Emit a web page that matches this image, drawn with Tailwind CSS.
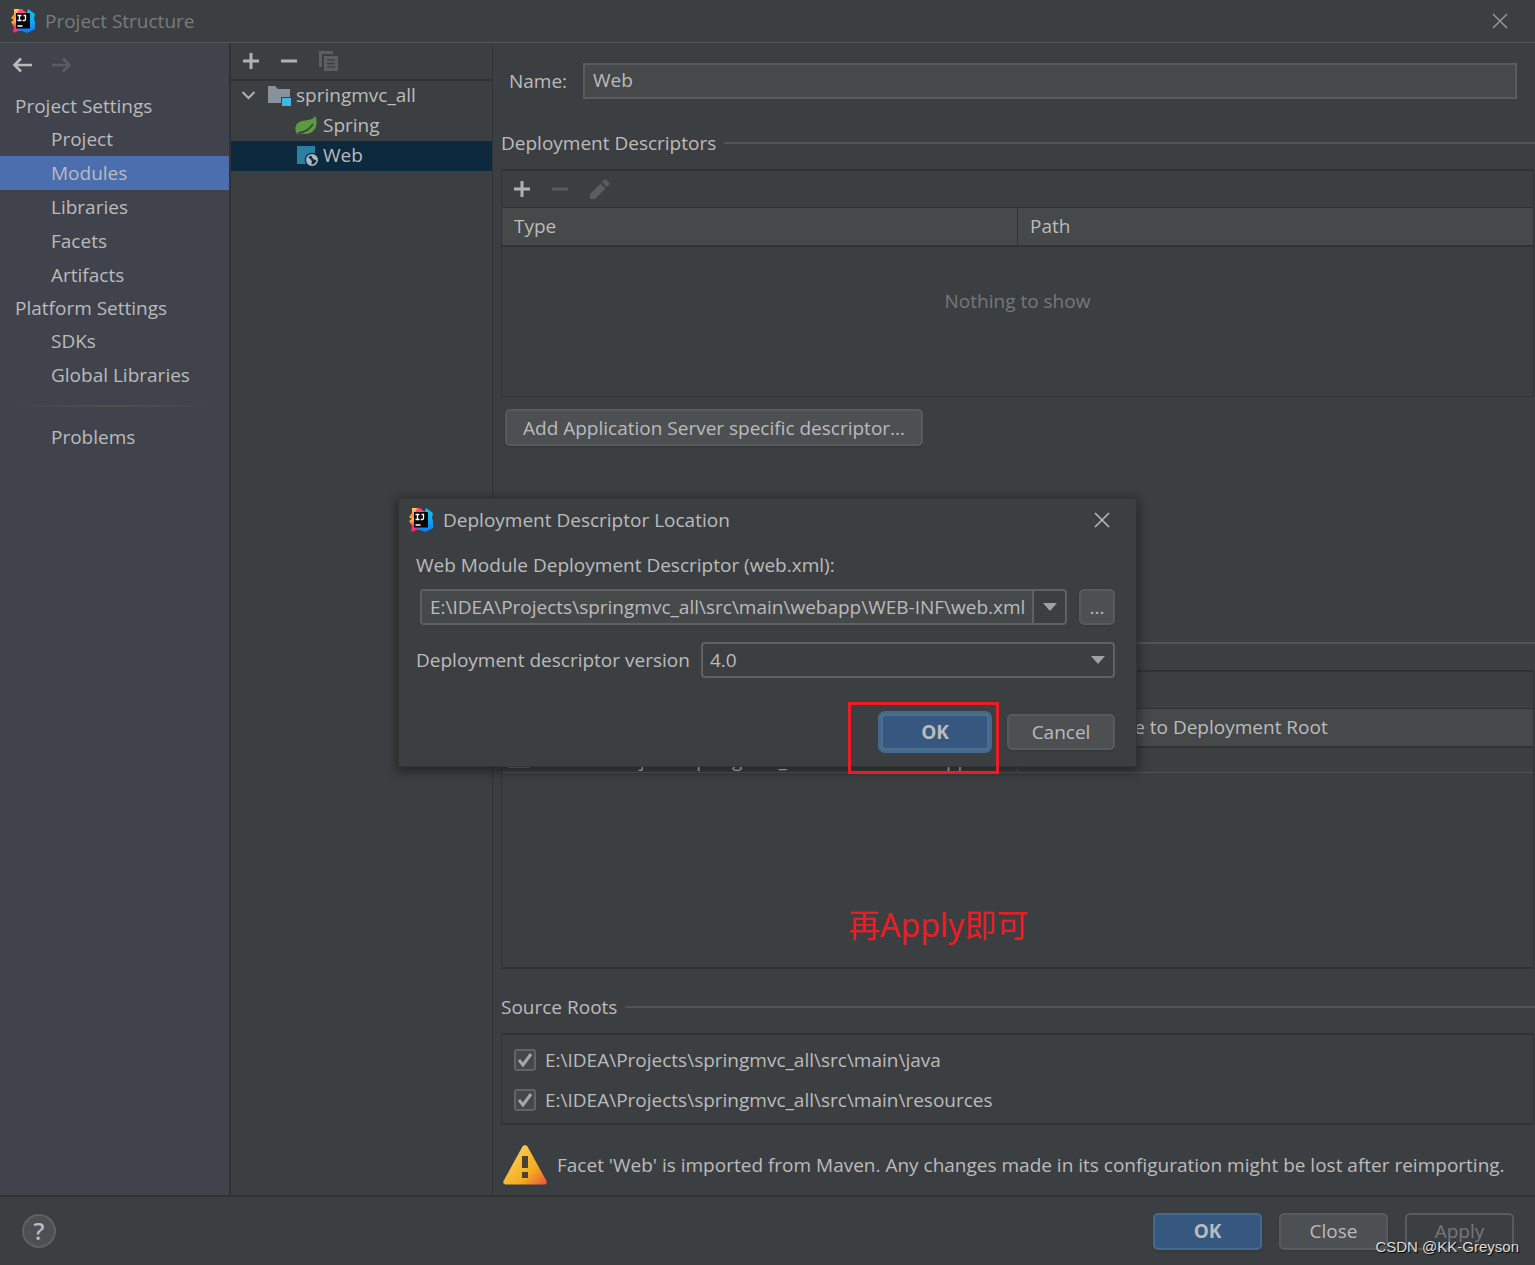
<!DOCTYPE html>
<html lang="en">
<head>
<meta charset="utf-8">
<title>Project Structure</title>
<script src="https://cdn.jsdelivr.net/npm/@tailwindcss/browser@4"></script>
</head>
<body class="bg-[#3c3f41] text-[#bbbbbb] text-[19px] leading-6 font-['Open_Sans','Noto_Sans_CJK_SC',sans-serif] antialiased">

<svg class="absolute size-0" aria-hidden="true">
  <defs>
    <linearGradient id="ijLeft" x1="0" y1="0" x2="0" y2="1">
      <stop offset="0" stop-color="#fdd45c"/><stop offset=".3" stop-color="#fd8a3c"/><stop offset=".5" stop-color="#fcc419"/><stop offset=".75" stop-color="#f4388c"/><stop offset="1" stop-color="#fe2857"/>
    </linearGradient>
    <linearGradient id="ijRight" x1="0" y1="0" x2="0" y2="1">
      <stop offset="0" stop-color="#07c3f2"/><stop offset=".5" stop-color="#12a9f5"/><stop offset="1" stop-color="#087cfa"/>
    </linearGradient>
    <linearGradient id="warn" x1=".2" y1=".3" x2="1" y2="1">
      <stop offset="0" stop-color="#f9c84c"/><stop offset=".55" stop-color="#f4ab1e"/><stop offset="1" stop-color="#e8533f"/>
    </linearGradient>
    <symbol id="ij" viewBox="0 0 24 24">
      <path d="M3 0l6 0 6 4-6 16-4 3.500-3-.5L3 18 0 13l3-2-3-2 3-4z" fill="url(#ijLeft)"/>
      <path d="M8 0h3l5 4-2 3-7 1-2 6 0-6z" fill="#f9427e" opacity=".9"/>
      <path d="M17 0l7 5-1 5 1 3v7l-8 4-5-2-5 0 9-6 1-13z" fill="url(#ijRight)"/>
      <rect x="5" y="4" width="14" height="15.500" fill="#090508"/>
      <path d="M6.500 6.500h4M8.500 6.500v5M6.500 11.500h4M12.500 6.500h2v3.700q0 1.300-1.300 1.300h-1.500M6.500 17h5" stroke="#fff" stroke-width="1.300" fill="none"/>
    </symbol>
    <symbol id="plus" viewBox="0 0 16 16"><path d="M0 8h16M8 0v16" stroke="currentColor" stroke-width="3"/></symbol>
    <symbol id="minus" viewBox="0 0 16 16"><path d="M0 8h16" stroke="currentColor" stroke-width="3"/></symbol>
    <symbol id="close" viewBox="0 0 16 16"><path d="M1 1l14 14M15 1L1 15" stroke="currentColor" stroke-width="1.500"/></symbol>
    <symbol id="pencil" viewBox="0 0 20 20"><path d="M0 15V20h5L15.500 9.500l-5-5zM12 3l5 5 2.300-2.300q.8-.8 0-1.600L15.900.7q-.8-.8-1.600 0z" fill="currentColor"/></symbol>
  </defs>
</svg>

<div class="flex min-h-screen flex-col">
  <header class="flex h-[43px] items-center border-b border-[#515658] pr-[27px] pl-[11px] text-[#777b7d]">
    <svg class="size-6"><use href="#ij"/></svg>
    <h1 class="ml-[10px]">Project Structure</h1>
    <button class="ml-auto text-[#949697]" aria-label="Close window"><svg class="size-4"><use href="#close"/></svg></button>
  </header>

  <div class="flex flex-1">
    <nav class="w-[231px] shrink-0 border-r-2 border-[#323232] bg-[#40434c]">
      <div class="flex h-[47px] items-center gap-5 pb-1 pl-3">
        <button class="text-[#bbbbbb]" aria-label="Back"><svg class="size-5" viewBox="0 0 20 20" fill="none" stroke="currentColor" stroke-width="2.500"><path d="M20 10H2.500M9 3.500L2.500 10 9 16.500"/></svg></button>
        <button class="text-[#5b5c5e]" aria-label="Forward"><svg class="size-5" viewBox="0 0 20 20" fill="none" stroke="currentColor" stroke-width="2.500"><path d="M0 10h17.500M11 3.500l6.500 6.500-6.500 6.500"/></svg></button>
      </div>
      <h2 class="flex h-8 items-center pl-[15px]">Project Settings</h2>
      <a href="#" class="flex h-[34px] items-center pl-[51px]">Project</a>
      <a href="#" class="flex h-[34px] items-center bg-[#4b6eaf] pl-[51px]">Modules</a>
      <a href="#" class="flex h-[34px] items-center pl-[51px]">Libraries</a>
      <a href="#" class="flex h-[34px] items-center pl-[51px]">Facets</a>
      <a href="#" class="flex h-[34px] items-center pl-[51px]">Artifacts</a>
      <h2 class="flex h-8 items-center pl-[15px]">Platform Settings</h2>
      <a href="#" class="flex h-[34px] items-center pl-[51px]">SDKs</a>
      <a href="#" class="flex h-[34px] items-center pl-[51px]">Global Libraries</a>
      <div class="mx-3 my-[13px] h-[2px] bg-linear-to-r from-transparent via-[#505052] to-transparent"></div>
      <a href="#" class="flex h-[34px] items-center pl-[51px]">Problems</a>
    </nav>

    <aside class="w-[262px] shrink-0 border-r border-[#323232]">
      <div class="flex h-[38px] items-center gap-[22px] border-b-2 border-[#323232] pl-3 text-[#afb1b3]">
        <button aria-label="Add"><svg class="size-4"><use href="#plus"/></svg></button>
        <button aria-label="Remove"><svg class="size-4"><use href="#minus"/></svg></button>
        <button aria-label="Copy" class="text-[#5c5e60]"><svg class="size-5" viewBox="0 0 20 20"><path d="M1.500 16V1.500H14" stroke="currentColor" stroke-width="3" fill="none"/><path d="M5 5h14v15H5z" fill="currentColor"/><path d="M8 9h8M8 12.500h8M8 16h8" stroke="#3c3f41" stroke-width="1.300"/></svg></button>
      </div>
      <ul>
        <li class="flex h-[30px] items-center pb-[2px] pl-[10px]">
          <svg class="h-4 w-[15px]" viewBox="0 0 15 16" fill="none" stroke="#afb1b3" stroke-width="2"><path d="M1.500 5l6 6 6-6"/></svg>
          <svg class="ml-3 h-[22px] w-6" viewBox="0 0 24 22"><path d="M0 2h7l3 3h12v8H13v6H0z" fill="#87939a"/><path d="M14 14h9v8h-9z" fill="#40b6e0"/></svg>
          <span class="ml-1">springmvc_all</span>
        </li>
        <li class="flex h-[30px] items-center pb-[2px] pl-[64px]">
          <svg class="h-[20px] w-[22px]" viewBox="0 0 22 20"><path d="M20.500 1c2 6 1.500 12-3 15.500-3.500 3-9 3-13 1.500L3 19.500 1.500 18Q0 16 .5 12.500C1 8 5 6 10 5.500S18 4 20.500 1z" fill="#5b9a41"/><path d="M3 18q10-1 15-9" stroke="#3c3f41" stroke-width="1.600" fill="none"/></svg>
          <span class="ml-[6px]">Spring</span>
        </li>
        <li class="flex h-[30px] items-center bg-[#0d293e] pb-[2px] pl-[66px]">
          <svg class="h-[22px] w-[22px]" viewBox="0 0 22 22"><path d="M0 2h18v18H0z" fill="#2b7fa3"/><circle cx="15" cy="16" r="7.300" fill="#0d293e"/><circle cx="15" cy="16" r="5.200" fill="none" stroke="#afb9c0" stroke-width="1.600"/><path d="M10 13.500l3 1 2 3-1 4q-3-2-4-5zM14 10.500l5 2 1 4-3-1-2-2z" fill="#afb9c0"/></svg>
          <span class="ml-1">Web</span>
        </li>
      </ul>
    </aside>

    <main class="min-w-0 flex-1 pl-2">
      <div class="flex items-center pt-5 pr-[18px] pl-2">
        <label for="name" class="w-[74px]">Name:</label>
        <input id="name" value="Web" class="h-9 flex-1 border-2 border-[#585c5d] bg-[#45494a] px-2 pb-[2px] outline-none">
      </div>

      <h2 class="mt-8 flex items-center gap-2">Deployment Descriptors<span class="h-[2px] flex-1 bg-[#515456]"></span></h2>
      <section class="mt-[14px] mr-px h-[228px] border border-t-2 border-[#323232]">
        <div class="flex h-9 items-center gap-[22px] pl-3 text-[#5a5c5e]">
          <button aria-label="Add descriptor" class="text-[#afb1b3]"><svg class="size-4"><use href="#plus"/></svg></button>
          <button aria-label="Remove descriptor"><svg class="size-4"><use href="#minus"/></svg></button>
          <button aria-label="Edit descriptor"><svg class="size-5"><use href="#pencil"/></svg></button>
        </div>
        <table class="w-full table-fixed border-collapse">
          <thead><tr class="h-[38px] border-t border-b-2 border-[#323232] bg-[#45494a] text-left">
            <th class="border-r border-[#323232] pl-3 font-normal">Type</th><th class="pl-3 font-normal">Path</th>
          </tr></thead>
          <tbody><tr><td colspan="2" class="h-[110px] text-center text-[#777777]">Nothing to show</td></tr></tbody>
        </table>
      </section>
      <button class="mt-3 ml-1 h-[37px] rounded-[5px] border-2 border-[#585b5c] bg-[#4c5052] px-4 shadow-sm">Add Application Server specific descriptor...</button>

      <h2 class="mt-[185px] flex items-center gap-2">Web Resource Directories<span class="h-[2px] flex-1 bg-[#515456]"></span></h2>
      <section class="mt-[15px] mr-px h-[299px] border border-y-2 border-[#323232]">
        <div class="flex h-9 items-center gap-[22px] pl-3 text-[#5a5c5e]">
          <button aria-label="Add directory" class="text-[#afb1b3]"><svg class="size-4"><use href="#plus"/></svg></button>
          <button aria-label="Remove directory"><svg class="size-4"><use href="#minus"/></svg></button>
          <button aria-label="Edit directory"><svg class="size-5"><use href="#pencil"/></svg></button>
        </div>
        <table class="w-full table-fixed border-collapse">
          <thead><tr class="h-[38px] border-t border-b-2 border-[#323232] bg-[#45494a] text-left">
            <th class="border-r border-[#323232] pl-3 font-normal">Web Resource Directory</th><th class="pl-3 font-normal">Path Relative to Deployment Root</th>
          </tr></thead>
          <tbody><tr class="border-b border-[#515456]">
            <td class="border-r border-[#515456] p-0 pl-[6px]"><div class="flex h-6 items-start gap-2"><svg class="h-[22px] w-[22px]" viewBox="0 0 22 22"><path d="M0 3h7l3 3h12v14H0z" fill="#5f676b"/></svg>E:\IDEA\Projects\springmvc_all\src\main\webapp</div></td><td class="p-0 pl-1">/</td>
          </tr></tbody>
        </table>
      </section>

      <h2 class="mt-[26px] flex items-center gap-2">Source Roots<span class="h-[2px] flex-1 bg-[#515456]"></span></h2>
      <section class="mt-[14px] mr-px flex h-[92px] flex-col justify-center gap-4 border border-y-2 border-[#323232] pt-px pl-3">
        <label class="flex items-center gap-[9px]">
          <span class="grid"><input type="checkbox" checked class="col-start-1 row-start-1 size-[22px] appearance-none rounded-[3px] border-2 border-[#626465] bg-[#43494a]"><svg class="pointer-events-none col-start-1 row-start-1 size-[22px]" viewBox="0 0 22 22" fill="none" stroke="#a7a7a7" stroke-width="3"><path d="M5 11l4 5 8-11"/></svg></span>
          E:\IDEA\Projects\springmvc_all\src\main\java
        </label>
        <label class="flex items-center gap-[9px]">
          <span class="grid"><input type="checkbox" checked class="col-start-1 row-start-1 size-[22px] appearance-none rounded-[3px] border-2 border-[#626465] bg-[#43494a]"><svg class="pointer-events-none col-start-1 row-start-1 size-[22px]" viewBox="0 0 22 22" fill="none" stroke="#a7a7a7" stroke-width="3"><path d="M5 11l4 5 8-11"/></svg></span>
          E:\IDEA\Projects\springmvc_all\src\main\resources
        </label>
      </section>
      <p class="flex h-[70px] items-center gap-[10px] pt-[10px] pl-[2px] whitespace-nowrap">
        <svg class="h-10 w-11 shrink-0" viewBox="0 0 44 40"><path d="M19.500 1.500q2.500-3 5 0L43.500 36q1 3-2 3.500h-39q-3-.5-2-3.500z" fill="url(#warn)"/><path d="M19 11h6v12h-6zM19 27h6v6h-6z" fill="#4a4034"/></svg>
        Facet 'Web' is imported from Maven. Any changes made in its configuration might be lost after reimporting.
      </p>
    </main>
  </div>

  <footer class="flex h-[70px] items-center gap-[17px] border-t-2 border-[#323232] pr-[21px] pl-[22px]">
    <button class="mr-auto grid size-[34px] place-items-center rounded-full border-2 border-[#5e6162] bg-[#4c5052] text-[24px] font-semibold" aria-label="Help">?</button>
    <button class="h-[37px] w-[109px] rounded-[5px] border-2 border-[#436a8f] bg-[#365880] font-bold shadow-sm">OK</button>
    <button class="h-[37px] w-[109px] rounded-[5px] border-2 border-[#585b5c] bg-[#4c5052] shadow-sm">Close</button>
    <button disabled class="h-[37px] w-[109px] rounded-[5px] border-2 border-[#585b5c] text-[#777777]">Apply</button>
  </footer>
</div>

<p class="absolute top-[901px] left-[848px] font-['Noto_Sans','Noto_Sans_CJK_SC',sans-serif] text-[32px] leading-[48px] text-[#ed1c24]">再Apply即可</p>
<p class="absolute right-4 bottom-[6px] font-['Liberation_Sans',sans-serif] text-[15px] text-[#dddddd] [text-shadow:1px_1px_1px_#000]">CSDN @KK-Greyson</p>

<div class="pointer-events-none absolute inset-0 flex items-center justify-center">
  <div role="dialog" aria-labelledby="dialogTitle" class="pointer-events-auto relative w-[739px] border border-[#323435] bg-[#3c3f41] px-[17px] pb-4 shadow-[0_3px_10px_2px_rgba(0,0,0,0.4)]">
    <div class="flex h-[42px] items-center pr-[9px]">
      <svg class="-ml-[7px] size-6"><use href="#ij"/></svg>
      <h2 id="dialogTitle" class="ml-[10px]">Deployment Descriptor Location</h2>
      <button class="ml-auto text-[#bbbbbb]" aria-label="Close dialog"><svg class="size-4"><use href="#close"/></svg></button>
    </div>
    <label for="descriptor" class="mt-3 block">Web Module Deployment Descriptor (web.xml):</label>
    <div class="mt-3 flex gap-3 pr-1 pl-1">
      <div class="flex h-9 flex-1 overflow-hidden rounded-[4px] border-2 border-[#5e6061]">
        <input id="descriptor" value="E:\IDEA\Projects\springmvc_all\src\main\webapp\WEB-INF\web.xml" class="min-w-0 flex-1 bg-[#45494a] pr-1 pl-2 outline-none">
        <button aria-label="Recent locations" class="grid w-[33px] place-items-center border-l-2 border-[#5e6061]"><svg class="h-2 w-[14px]" viewBox="0 0 14 8"><path d="M0 0h14L7 8z" fill="#9fa2a5"/></svg></button>
      </div>
      <button class="h-9 w-9 rounded-[5px] border-2 border-[#585b5c] bg-[#4c5052] shadow-sm" aria-label="Browse">...</button>
    </div>
    <div class="mt-[17px] flex items-center justify-between pr-1">
      <label for="version">Deployment descriptor version</label>
      <div class="grid w-[414px]">
        <select id="version" class="col-start-1 row-start-1 h-9 appearance-none rounded-[4px] border-2 border-[#5e6061] bg-[#3c3f41] px-[7px]"><option>4.0</option></select>
        <svg class="pointer-events-none col-start-1 row-start-1 mr-[10px] h-2 w-[14px] place-self-center justify-self-end" viewBox="0 0 14 8"><path d="M0 0h14L7 8z" fill="#9fa2a5"/></svg>
      </div>
    </div>
    <div class="mt-9 flex justify-end gap-[18px] pr-1">
      <button class="h-9 w-[108px] rounded-[4px] border-2 border-[#4c708c] bg-[#365880] font-bold ring-3 ring-[#43698e]">OK</button>
      <button class="h-9 w-[108px] rounded-[5px] border-2 border-[#585b5c] bg-[#4c5052] shadow-sm">Cancel</button>
    </div>
    <div class="pointer-events-none absolute top-[203px] left-[449px] h-[72px] w-[151px] border-3 border-[#ed1c24]"></div>
  </div>
</div>
</body>
</html>
